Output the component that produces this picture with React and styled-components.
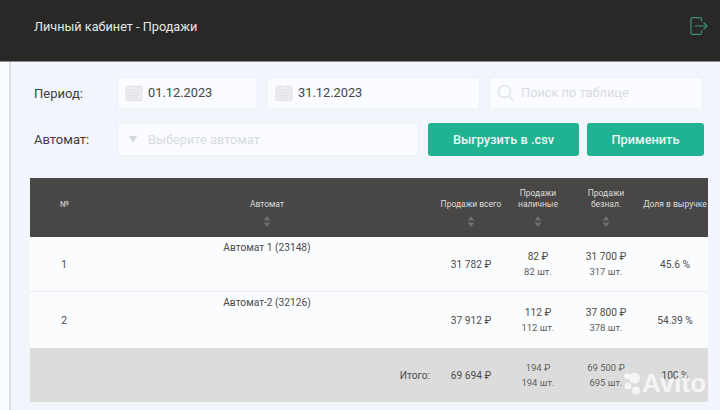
import React from 'react'
import styled, { createGlobalStyle } from 'styled-components'

const Global = createGlobalStyle`
  html, body { margin: 0; padding: 0; background: #f9fcff; }
  body { width: 720px; height: 410px; overflow: hidden; font-family: Roboto, "Liberation Sans", sans-serif; }
  * { box-sizing: border-box; }
`;

const Page = styled.div`
  position: relative;
  width: 720px;
  height: 410px;
  overflow: hidden;
`;
const Header = styled.header`
  height: 62px;
  background: #2a2827;
  border-bottom: 1px solid #8d8d8d;
  display: flex;
  align-items: center;
  justify-content: space-between;
  padding: 0 12px 9px 34px;
  color: #e6e6e6;
  font-size: 12.7px;
`;
const Body = styled.div`
  height: 348px;
  margin-left: 9px;
  border-left: 2px solid #dcdfe4;
  padding: 15px 12px 0 19px;
  background: #f2f5fb;
`;
const Row = styled.div`
  display: flex;
  align-items: center;
  height: ${p => p.$h}px;
  margin-bottom: ${p => p.$mb}px;
`;
const Label = styled.div`
  width: 87px;
  padding-left: 4px;
  font-size: 13px;
  color: #3f3f3f;
`;
const Field = styled.div`
  width: ${p => p.$w}px;
  height: ${p => p.$h}px;
  margin-right: ${p => p.$mr}px;
  background: #fafcff;
  border: 1px solid #eef1f6;
  border-radius: 3px;
  display: flex;
  align-items: center;
  gap: ${p => p.$gap}px;
  padding: 0 0 1px ${p => p.$pl}px;
  font-size: 12.8px;
  color: ${p => (p.$muted ? '#d8dade' : '#454545')};
`;
const Caret = styled.span`
  width: 0;
  height: 0;
  border-left: 4px solid transparent;
  border-right: 4px solid transparent;
  border-top: 7px solid #d3d6db;
`;
const Button = styled.div`
  width: ${p => p.$w}px;
  height: 33px;
  margin-right: ${p => p.$mr}px;
  background: #1fb392;
  border-radius: 3px;
  display: flex;
  align-items: center;
  justify-content: center;
  color: #e9f6f2;
  font-size: 12.8px;
  font-weight: 500;
`;
const Table = styled.div`
  width: 678px;
  margin-top: 22px;
`;
const cols = '68px 338px 70px 64px 72px 66px';
const HeadRow = styled.div`
  display: grid;
  grid-template-columns: ${cols};
  height: 59px;
  background: #484746;
  color: #dcdcdc;
  font-size: 8.5px;
  text-align: center;
`;
const HeadCell = styled.div`
  position: relative;
  display: flex;
  align-items: flex-end;
  justify-content: center;
  height: 32px;
  line-height: 11px;
  white-space: nowrap;
`;
const SortWrap = styled.span`
  position: absolute;
  left: 50%;
  top: 38px;
  margin-left: -4px;
  width: 8px;
  height: 11px;
`;
const DataRow = styled.div`
  display: grid;
  grid-template-columns: ${cols};
  height: ${p => p.$h}px;
  background: ${p => (p.$total ? '#dcdcdc' : '#fafcfe')};
  border-bottom: ${p => (p.$line ? '1px solid #e9ebee' : 'none')};
  color: #4b4b4b;
  font-size: 10.2px;
  text-align: center;
`;
const Cell = styled.div`
  display: flex;
  flex-direction: column;
  align-items: center;
  justify-content: ${p => (p.$top ? 'flex-start' : 'center')};
  padding-top: ${p => (p.$top ? 4 : 0)}px;
  line-height: 13px;
`;
const TotalLabel = styled(Cell)`
  align-items: flex-end;
  padding-right: 6px;
`;
const Small = styled.span`
  font-size: 9.5px;
  margin-top: ${p => p.$mt}px;
  color: #5e5e5e;
`;
const Mark = styled.div`
  position: absolute;
  left: 622px;
  top: 368px;
  display: flex;
  align-items: center;
  color: rgba(255, 255, 255, 0.72);
  font-family: "Liberation Sans", sans-serif;
  font-weight: 700;
  font-size: 26px;
  line-height: 30px;
`;

function Calendar() {
  return (
    <svg width="18" height="17" viewBox="0 0 18 17" fill="none" stroke="#dfe1e5" strokeWidth="1">
      <rect x="1" y="2.5" width="16" height="14" rx="1" fill="#eceef1" />
      <path d="M1 6h16M5 1v3M13 1v3M3 9h12M3 11.5h12M3 14h12M6 7v8M9 7v8M12 7v8" />
    </svg>
  )
}
function Search() {
  return (
    <svg width="18" height="18" viewBox="0 0 18 18" fill="none" stroke="#dfe2e6" strokeWidth="1.5">
      <circle cx="7.5" cy="7.5" r="6" />
      <path d="M12 12l5 5" />
    </svg>
  )
}
function Logout() {
  return (
    <svg width="18" height="18" viewBox="0 0 18 18" fill="none" stroke="#3b8d7c" strokeWidth="1.2">
      <path d="M11.500 4.500V2A1.500 1.500 0 0 0 10 .6H2.600A1.500 1.500 0 0 0 1 2v14a1.500 1.500 0 0 0 1.600 1.400H10a1.500 1.500 0 0 0 1.500-1.400v-2.500" />
      <path d="M5 9h12M13.500 5.500L17 9l-3.500 3.500" />
    </svg>
  )
}
function Sort() {
  return (
    <SortWrap>
      <svg width="8" height="11" viewBox="0 0 8 11" fill="#6f6e6d">
        <path d="M4 0l3.500 4.500h-7zM4 11L.5 6.500h7z" />
      </svg>
    </SortWrap>
  )
}
function AvitoDots() {
  return (
    <svg width="20" height="24" viewBox="0 0 20 24" fill="rgba(255,255,255,0.72)">
      <circle cx="5" cy="5" r="3" />
      <circle cx="12.500" cy="7" r="5.500" />
      <circle cx="6" cy="15" r="3.500" />
      <circle cx="14" cy="19.500" r="4" />
    </svg>
  )
}

const heads = [
  ['№'], ['Автомат'], ['Продажи всего'], ['Продажи', 'наличные'], ['Продажи', 'безнал.'], ['Доля в выручке'],
]

function App() {
  return (
    <Page>
      <Global />
      <Header>
        <span>Личный кабинет - Продажи</span>
        <Logout />
      </Header>
      <Body>
        <Row $h={32} $mb={14}>
          <Label>Период:</Label>
          <Field $w={140} $h={32} $mr={10} $pl={7} $gap={5}><Calendar />01.12.2023</Field>
          <Field $w={213} $h={32} $mr={9} $pl={7} $gap={5}><Calendar />31.12.2023</Field>
          <Field $w={214} $h={32} $mr={0} $pl={7} $gap={6} $muted><Search />Поиск по таблице</Field>
        </Row>
        <Row $h={33} $mb={0}>
          <Label>Автомат:</Label>
          <Field $w={302} $h={33} $mr={9} $pl={11} $gap={11} $muted><Caret />Выберите автомат</Field>
          <Button $w={151} $mr={8}>Выгрузить в .csv</Button>
          <Button $w={117} $mr={0}>Применить</Button>
        </Row>
        <Table>
          <HeadRow>
            {heads.map((h, i) => (
              <HeadCell key={i}>
                <span>{h.map((l, j) => <div key={j}>{l}</div>)}</span>
                {i > 0 && i < 5 && <Sort />}
              </HeadCell>
            ))}
          </HeadRow>
          <DataRow $h={55} $line>
            <Cell>1</Cell>
            <Cell $top>Автомат 1 (23148)</Cell>
            <Cell>31 782 ₽</Cell>
            <Cell>82 ₽<Small $mt={2}>82 шт.</Small></Cell>
            <Cell>31 700 ₽<Small $mt={2}>317 шт.</Small></Cell>
            <Cell>45.6 %</Cell>
          </DataRow>
          <DataRow $h={56}>
            <Cell>2</Cell>
            <Cell $top>Автомат-2 (32126)</Cell>
            <Cell>37 912 ₽</Cell>
            <Cell>112 ₽<Small $mt={2}>112 шт.</Small></Cell>
            <Cell>37 800 ₽<Small $mt={2}>378 шт.</Small></Cell>
            <Cell>54.39 %</Cell>
          </DataRow>
          <DataRow $h={54} $total>
            <Cell />
            <TotalLabel>Итого:</TotalLabel>
            <Cell>69 694 ₽</Cell>
            <Cell><Small $mt={0}>194 ₽</Small><Small $mt={2}>194 шт.</Small></Cell>
            <Cell><Small $mt={0}>69 500 ₽</Small><Small $mt={2}>695 шт.</Small></Cell>
            <Cell>100 %</Cell>
          </DataRow>
        </Table>
      </Body>
      <Mark><AvitoDots />Avito</Mark>
    </Page>
  )
}

export default App
